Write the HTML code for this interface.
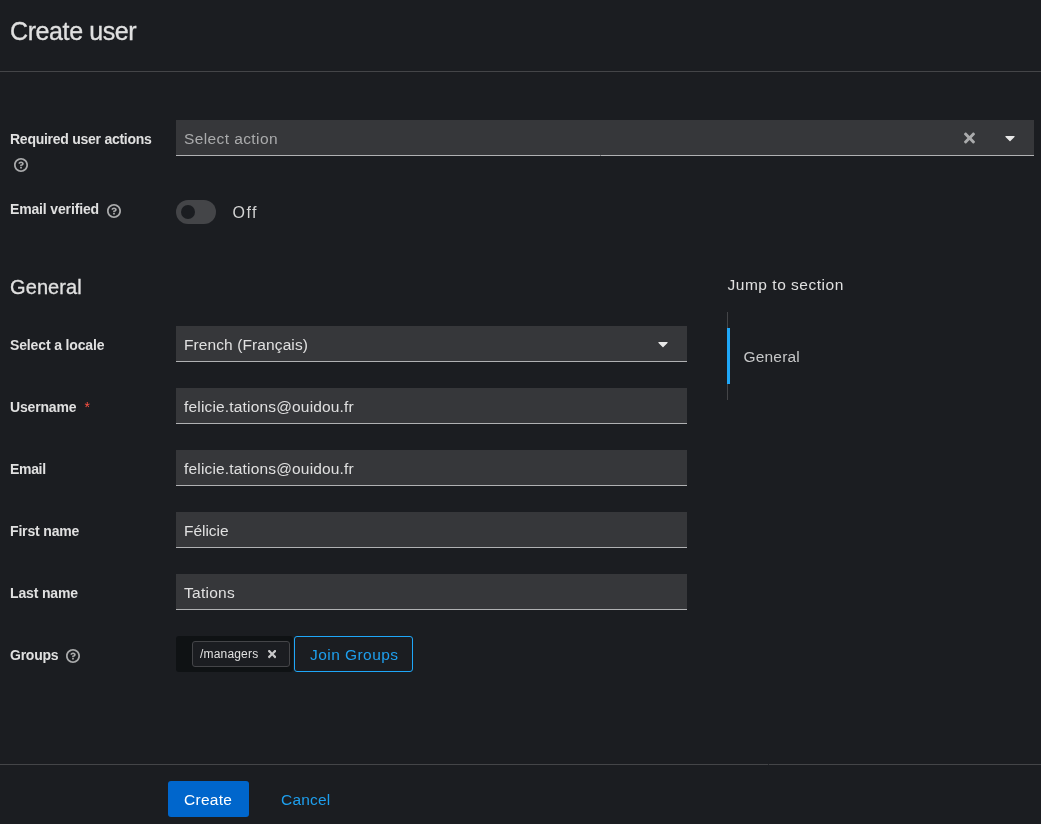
<!DOCTYPE html>
<html lang="en">
<head>
<meta charset="utf-8">
<title>Create user</title>
<style>
*{box-sizing:border-box;margin:0;padding:0}
html,body{width:1041px;height:824px;overflow:hidden;background:#1b1d21;color:#e0e0e0;font-family:"Liberation Sans",sans-serif;}
.abs{position:absolute;white-space:nowrap}
#title{left:10px;top:15px;font-size:25px;line-height:32px;color:#e0e0e0;letter-spacing:-0.4px;-webkit-text-stroke:0.3px #e0e0e0}
.hr{position:absolute;left:0;width:1041px;height:1px;background:#444548}
.label{left:10px;font-weight:bold;font-size:14px;line-height:21px;color:#e0e0e0}
.field{position:absolute;height:36px;background:#36373a;border-bottom:1px solid #b0b1b3;font-size:15.5px;line-height:24px;padding:7px 8px 0 8px;color:#e0e0e0;white-space:nowrap}
.ph{color:#aaabac}
.h2{font-size:20px;line-height:30px;color:#e0e0e0;-webkit-text-stroke:0.3px #e0e0e0}
svg{position:absolute;display:block}
.t16{font-size:15.5px;line-height:24px}
</style>
</head>
<body>
<svg width="0" height="0" style="left:-10px;top:-10px">
<defs>
<path id="help" d="M521.3,576 C627.5,576 713.7,502 713.7,413.7 C713.7,325.4 627.6,253.6 521.3,253.6 C366,253.6 334.5,337.7 329.2,407.2 C329.2,414.3 335.2,416 343.5,416 L445,416 C450.5,416 458,415.5 460.8,406.5 C460.8,362.6 582.9,357.1 582.9,413.6 C582.9,441.9 556.2,470.9 521.3,473 C486.4,475.1 447.3,479.8 447.3,521.7 L447.3,553.8 C447.3,570.8 456.1,576 472,576 C487.9,576 521.3,576 521.3,576 M575.3,751.3 L575.3,655.3 C575.3,651 573.6,647 570.6,644 C567.6,641 563.5,639.3 559.3,639.3 L463.3,639.3 C459,639.3 455,641 452,644 C449,647 447.3,651 447.3,655.3 L447.3,751.3 C447.3,755.5 449,759.6 452,762.6 C455,765.6 459,767.3 463.3,767.3 L559.3,767.3 C563.5,767.3 567.6,765.6 570.6,762.6 C573.6,759.6 575.3,755.5 575.3,751.3 M512,896 C300.2,896 128,723.900 128,512 C128,300.3 300.2,128 512,128 C723.8,128 896,300.2 896,512 C896,723.8 723.7,896 512,896 M512.1,0 C229.7,0 0,229.8 0,512 C0,794.2 229.8,1024 512.1,1024 C794.4,1024 1024,794.3 1024,512 C1024,229.7 794.4,0 512.1,0"/>
<path id="times" d="M242.72 256l100.070-100.070c12.280-12.280 12.280-32.190 0-44.480l-22.240-22.240c-12.280-12.280-32.190-12.280-44.480 0L176 189.280 75.930 89.210c-12.280-12.280-32.190-12.280-44.480 0L9.210 111.450c-12.280 12.280-12.280 32.190 0 44.480L109.280 256 9.210 356.070c-12.280 12.280-12.280 32.190 0 44.480l22.240 22.240c12.280 12.280 32.200 12.280 44.480 0L176 322.720l100.070 100.070c12.280 12.280 32.200 12.280 44.480 0l22.240-22.240c12.280-12.280 12.280-32.190 0-44.480L242.720 256z"/>
<path id="caret" d="M31.3 192h257.300c17.800 0 26.700 21.500 14.100 34.100L174.100 354.800c-7.800 7.800-20.500 7.800-28.300 0L17.200 226.100C4.600 213.500 13.500 192 31.300 192z"/>
</defs>
</svg>

<div id="wrap" style="position:absolute;left:0;top:0;width:1041px;height:824px;will-change:transform">
<div class="abs" id="title">Create user</div>
<div class="hr" style="top:71px"></div>

<div class="abs label" style="top:129px;letter-spacing:-0.26px">Required user actions</div>
<svg style="left:14px;top:158px" width="14" height="14" viewBox="0 0 1024 1024" fill="#aaabac"><use href="#help"/></svg>
<div class="field" style="left:176px;top:120px;width:858px"><span class="ph" style="letter-spacing:0.4px">Select action</span></div>
<svg style="left:964px;top:130px" width="11" height="16" viewBox="0 0 352 512" fill="#aaabac"><use href="#times"/></svg>
<svg style="left:1005px;top:130px" width="10" height="16" viewBox="0 0 320 512" fill="#e8e8e8"><use href="#caret"/></svg>

<div class="abs label" style="top:199px;letter-spacing:-0.15px">Email verified</div>
<svg style="left:107px;top:203.500px" width="14" height="14" viewBox="0 0 1024 1024" fill="#aaabac"><use href="#help"/></svg>
<div style="position:absolute;left:176px;top:200px;width:40px;height:24px;border-radius:12px;background:#444548"></div>
<div style="position:absolute;left:181px;top:205px;width:14px;height:14px;border-radius:7px;background:#1b1d21"></div>
<div class="abs" style="left:232.500px;top:201px;font-size:16px;line-height:24px;color:#d2d2d2;letter-spacing:1.5px">Off</div>

<div class="abs h2" style="left:10px;top:272px;letter-spacing:0.1px">General</div>

<div class="abs label" style="top:335px;letter-spacing:-0.14px">Select a locale</div>
<div class="field" style="left:176px;top:326px;width:511px"><span style="letter-spacing:0.1px">French (Français)</span></div>
<svg style="left:658px;top:336px" width="10" height="16" viewBox="0 0 320 512" fill="#e8e8e8"><use href="#caret"/></svg>

<div class="abs label" style="top:397px;letter-spacing:-0.17px">Username<span style="position:absolute;left:74.500px;top:0px;color:#fe5142;font-weight:normal;font-size:14px;letter-spacing:0">*</span></div>
<div class="field" style="left:176px;top:388px;width:511px;letter-spacing:0.17px">felicie.tations@ouidou.fr</div>

<div class="abs label" style="top:459px;letter-spacing:-0.32px">Email</div>
<div class="field" style="left:176px;top:450px;width:511px;letter-spacing:0.17px">felicie.tations@ouidou.fr</div>

<div class="abs label" style="top:521px;letter-spacing:-0.16px">First name</div>
<div class="field" style="left:176px;top:512px;width:511px;letter-spacing:-0.04px">Félicie</div>

<div class="abs label" style="top:583px;letter-spacing:-0.15px">Last name</div>
<div class="field" style="left:176px;top:574px;width:511px;letter-spacing:0.27px">Tations</div>

<div class="abs label" style="top:645px;letter-spacing:-0.25px">Groups</div>
<svg style="left:66px;top:648.800px" width="14" height="14" viewBox="0 0 1024 1024" fill="#aaabac"><use href="#help"/></svg>
<div style="position:absolute;left:176px;top:636px;width:117px;height:36px;background:#0f1214;border-radius:3px"></div>
<div style="position:absolute;left:192px;top:641px;width:98px;height:26px;border:1px solid #444548;border-radius:3px;background:#1b1d21"></div>
<div class="abs" style="left:200px;top:645.400px;font-size:12px;line-height:18px;color:#e0e0e0;letter-spacing:0.18px">/managers</div>
<svg style="left:268.100px;top:648.400px" width="8.250" height="12" viewBox="0 0 352 512" fill="#c8c8c9"><use href="#times"/></svg>
<div style="position:absolute;left:294px;top:636px;width:119px;height:36px;border:1px solid #1fa7f8;border-radius:3px"></div>
<div class="abs t16" style="left:310px;top:643px;color:#1e9fee;letter-spacing:0.45px">Join Groups</div>

<div class="abs t16" style="left:727.500px;top:273px;color:#e0e0e0;letter-spacing:0.52px">Jump to section</div>
<div style="position:absolute;left:727px;top:312px;width:1px;height:88px;background:#444548"></div>
<div style="position:absolute;left:727px;top:328px;width:3px;height:56px;background:#1fa7f8"></div>
<div class="abs t16" style="left:743.500px;top:345px;color:#c6c7c8;letter-spacing:0.19px">General</div>

<div class="hr" style="top:764px"></div>
<div style="position:absolute;left:768px;top:764px;width:1px;height:1px;background:#25272b"></div>
<div style="position:absolute;left:600px;top:155px;width:1px;height:1px;background:#6e6f72"></div>
<div style="position:absolute;left:168px;top:781px;width:81px;height:36px;background:#0066cc;border-radius:3px"></div>
<div class="abs t16" style="left:184px;top:788px;color:#fff;letter-spacing:0.28px">Create</div>
<div class="abs t16" style="left:281px;top:788px;color:#1e9fee;letter-spacing:0.19px">Cancel</div>
</div>
</body>
</html>
